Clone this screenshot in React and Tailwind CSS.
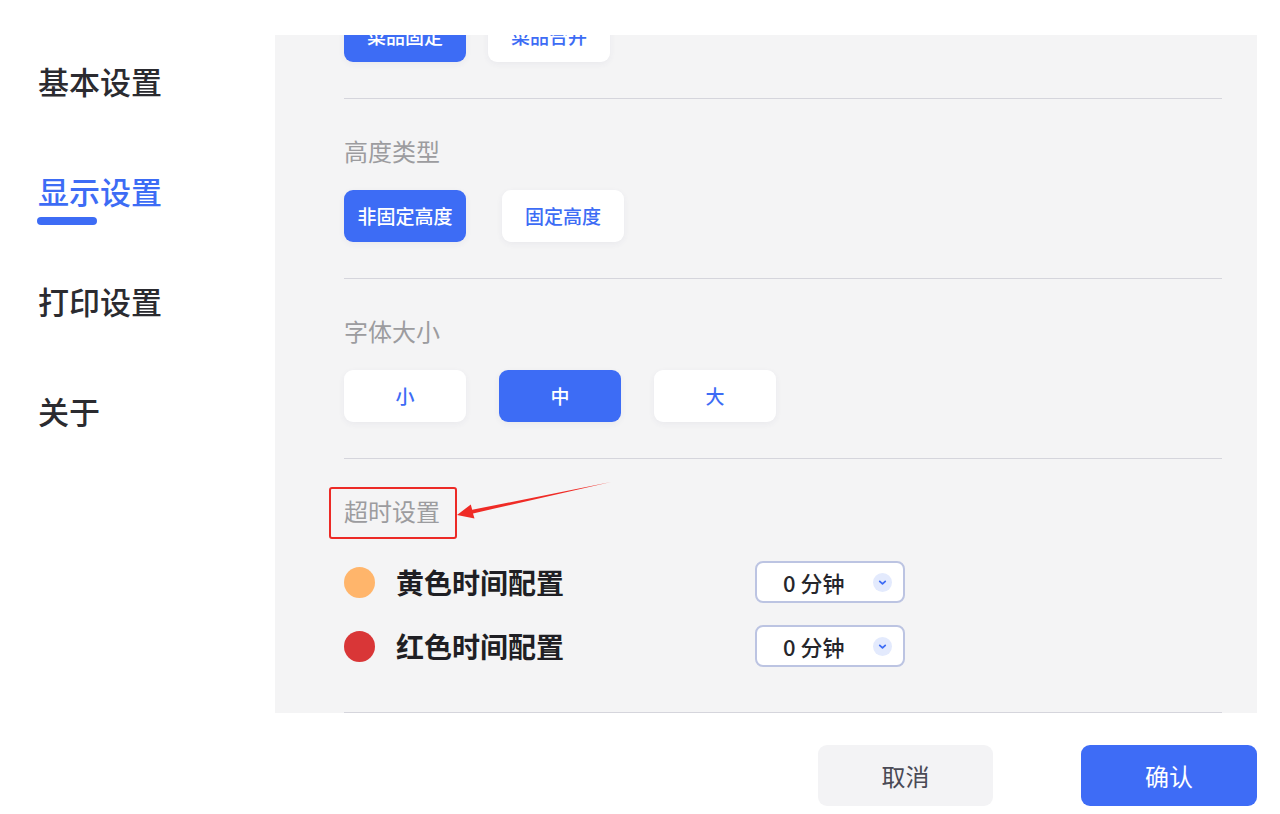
import { useState } from 'react';

const navItems = ['基本设置', '显示设置', '打印设置', '关于'];

function OptionRow({ options, value, onChange, gaps }) {
  return (
    <div className="flex">
      {options.map((opt, i) => (
        <button
          key={opt}
          type="button"
          onClick={() => onChange(opt)}
          className={`h-[52px] w-[122px] shrink-0 rounded-[9px] text-[19px] font-medium shadow-[0_2px_6px_rgba(60,70,120,0.06)] ${
            value === opt ? 'bg-[#3d6cf5] text-white' : 'bg-white text-[#3d6cf5]'
          } ${i > 0 ? gaps : ''}`}
        >
          {opt}
        </button>
      ))}
    </div>
  );
}

function Section({ title, children }) {
  return (
    <div className="pt-[36px]">
      <div className="text-[24px] leading-[32px] text-[#9c9c9f]">{title}</div>
      <div className="mt-[23px]">{children}</div>
    </div>
  );
}

function TimeSelect() {
  return (
    <div className="flex h-[42px] w-[150px] items-center rounded-[8px] border-2 border-[#bcc4e2] bg-white pl-[26px] pr-[11px]">
      <span className="text-[22px] font-medium text-[#26262b]">0 分钟</span>
      <span className="ml-auto flex h-[19px] w-[19px] items-center justify-center rounded-full bg-[#e3eafd]">
        <svg width="11" height="11" viewBox="0 0 10 10" fill="none">
          <path d="M2.5 4 L5 6.3 L7.5 4" stroke="#3d6cf5" strokeWidth="1.6" strokeLinecap="round" strokeLinejoin="round" />
        </svg>
      </span>
    </div>
  );
}

function TimeRow({ color, label }) {
  return (
    <div className="flex h-[42px] items-center">
      <span className={`h-[31px] w-[31px] rounded-full ${color}`} />
      <span className="ml-[21px] w-[359px] text-[28px] font-semibold text-[#1f1f24]">{label}</span>
      <TimeSelect />
    </div>
  );
}

export default function App() {
  const [active, setActive] = useState('显示设置');
  const [dish, setDish] = useState('菜品固定');
  const [height, setHeight] = useState('非固定高度');
  const [size, setSize] = useState('中');

  return (
    <div
      className="flex h-[814px] w-[1280px] overflow-hidden bg-white"
      style={{ fontFamily: '"Noto Sans CJK SC", "Noto Sans", sans-serif' }}
    >
      {/* 左侧菜单 */}
      <nav className="flex w-[275px] shrink-0 flex-col gap-[70px] pl-[38px] pt-[61px]">
        {navItems.map((item) => (
          <button
            key={item}
            type="button"
            onClick={() => setActive(item)}
            className={`relative self-start text-left text-[31px] font-medium leading-[40px] ${
              active === item ? 'text-[#3d6cf5]' : 'text-[#2b2b30]'
            }`}
          >
            {item}
            {active === item && (
              <span className="absolute left-[-1px] top-[46px] h-[8px] w-[60px] rounded-full bg-[#3d6cf5]" />
            )}
          </button>
        ))}
      </nav>

      {/* 右侧内容 */}
      <div className="flex w-[982px] shrink-0 flex-col pt-[35px]">
        <div className="h-[678px] overflow-hidden bg-[#f4f4f5] pl-[69px] pr-[35px]">
          <div className="-mt-[25px]">
            <OptionRow options={['菜品固定', '菜品合并']} value={dish} onChange={setDish} gaps="ml-[22px]" />
            <div className="mt-[36px] h-px bg-[#d5d5dc]" />

            <Section title="高度类型">
              <OptionRow options={['非固定高度', '固定高度']} value={height} onChange={setHeight} gaps="ml-[36px]" />
            </Section>
            <div className="mt-[36px] h-px bg-[#d5d5dc]" />

            <Section title="字体大小">
              <OptionRow options={['小', '中', '大']} value={size} onChange={setSize} gaps="ml-[33px]" />
            </Section>
            <div className="mt-[36px] h-px bg-[#d5d5dc]" />

            <div className="pt-[36px]">
              <div className="relative">
                <div className="text-[24px] leading-[32px] text-[#9c9c9f]">超时设置</div>
                {/* 标注框 */}
                <div className="absolute left-[-15px] top-[-8px] h-[52px] w-[128px] rounded-[3px] border-2 border-[#ec2a26]" />
                <svg className="absolute left-[111px] top-[-17px]" width="160" height="44" viewBox="0 0 160 44">
                  <polygon points="2,37 19.5,40.5 18,35.4 156,4 17.2,31.8 15.8,26.5" fill="#ef2b26" />
                </svg>
              </div>
              <div className="mt-[34px] flex flex-col gap-[22px]">
                <TimeRow color="bg-[#ffb56b]" label="黄色时间配置" />
                <TimeRow color="bg-[#d93637]" label="红色时间配置" />
              </div>
            </div>
            <div className="mt-[45px] h-px w-full bg-[#d5d5dc]" />
          </div>
        </div>

        {/* 底部按钮 */}
        <div className="flex justify-end gap-[88px] pt-[32px]">
          <button type="button" className="h-[61px] w-[175px] rounded-[9px] bg-[#f3f3f5] text-[24px] text-[#4a4a55]">
            取消
          </button>
          <button type="button" className="h-[61px] w-[176px] rounded-[9px] bg-[#3e6cf6] text-[24px] text-white">
            确认
          </button>
        </div>
      </div>
    </div>
  );
}
